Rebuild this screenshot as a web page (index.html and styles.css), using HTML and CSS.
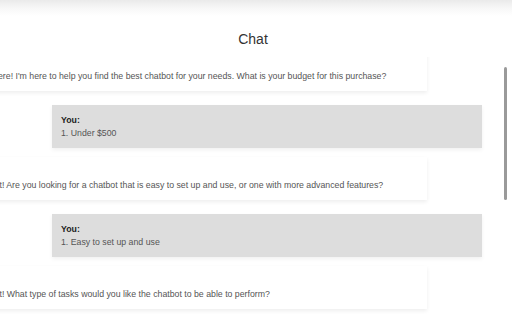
FILE: index.html
```html
<!DOCTYPE html>
<html>
<head>
<meta charset="utf-8">
<link rel="stylesheet" href="styles.css">
</head>
<body>
<div class="app">
  <header class="header"><h1 class="title">Chat</h1></header>
  <div class="viewport">
    <div class="messages">
      <div class="msg bot first">
        <div class="label">Bot:</div>
        <div class="text">Hi there! I'm here to help you find the best chatbot for your needs. What is your budget for this purchase?</div>
      </div>
      <div class="msg user">
        <div class="label">You:</div>
        <div class="text">1. Under $500</div>
      </div>
      <div class="msg bot">
        <div class="label">Bot:</div>
        <div class="text">Great! Are you looking for a chatbot that is easy to set up and use, or one with more advanced features?</div>
      </div>
      <div class="msg user">
        <div class="label">You:</div>
        <div class="text">1. Easy to set up and use</div>
      </div>
      <div class="msg bot">
        <div class="label">Bot:</div>
        <div class="text">Great! What type of tasks would you like the chatbot to be able to perform?</div>
      </div>
    </div>
    <div class="scroll-thumb"></div>
  </div>
</div>
</body>
</html>
```
FILE: styles.css
```css
html, body {
  margin: 0;
  padding: 0;
}
body {
  width: 512px;
  height: 320px;
  overflow: hidden;
  background: linear-gradient(#eaeaea 0px, #f7f7f7 8px, #ffffff 16px);
  font-family: "Liberation Sans", Arial, sans-serif;
}
.app {
  display: flex;
  flex-direction: column;
  height: 320px;
}
.header {
  height: 57px;
  flex: none;
  padding-right: 6px;
}
.title {
  margin: 0;
  padding-top: 30px;
  text-align: center;
  font-size: 14px;
  line-height: 18px;
  font-weight: normal;
  color: #333;
}
.viewport {
  position: relative;
  flex: 1;
  overflow: hidden;
}
.messages {
  display: flex;
  flex-direction: column;
  margin-top: -9px;
}
.msg {
  box-sizing: border-box;
  height: 43px;
  padding: 9px 9px 8px;
  font-size: 8.75px;
  line-height: 13px;
  white-space: nowrap;
  flex: none;
}
.label {
  font-weight: bold;
  color: #222;
}
.text {
  color: #555;
}
.bot {
  background: #fff;
  width: 456px;
  margin-left: -29px;
  margin-top: 9px;
  box-shadow: 0 2px 4px rgba(0, 0, 0, 0.07);
}
.bot.first {
  margin-top: 0;
}
.user {
  background: #dddddd;
  width: 430px;
  margin-left: 52px;
  margin-top: 14px;
  box-shadow: 0 2px 4px rgba(0, 0, 0, 0.06);
}
.scroll-thumb {
  position: absolute;
  left: 504px;
  top: 10px;
  width: 3px;
  height: 133px;
  border-radius: 2px;
  background: #9a9a9a;
}
```
